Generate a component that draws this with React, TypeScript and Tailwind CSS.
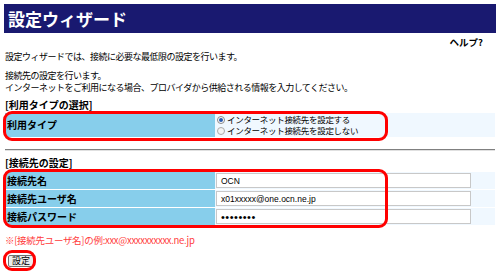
import React from 'react';

const jp = { fontFamily: '"MS PGothic", "Noto Sans CJK JP", sans-serif' };

function RedRing({ className }: { className: string }) {
  return <div className={`pointer-events-none absolute rounded-[9px] border-[3px] border-[#ff0000] ${className}`} />;
}

function InputRow({ label, value, password }: { label: string; value: string; password?: boolean }) {
  return (
    <div className="flex h-[17px]">
      <div className="flex w-[210px] items-center bg-[#87ceeb] pl-[2px] text-[10px] font-bold leading-[12px] text-black">
        {label}
      </div>
      <div className="flex flex-1 items-center bg-[#f0f8ff] pl-[1px]">
        <div
          className="flex h-[15px] w-[255px] items-center border border-[#c8c8c8] bg-white pl-[4px] text-[8.5px] leading-[10px] text-black"
          style={{ fontFamily: '"Liberation Sans", Arial, sans-serif' }}
        >
          {password ? <span className="text-[11px] leading-[10px] tracking-[0.5px]">••••••••</span> : value}
        </div>
      </div>
    </div>
  );
}

export default function App() {
  return (
    <div className="h-[278px] w-[500px] overflow-hidden bg-white text-black" style={jp}>
      <div className="mx-[4px] mt-[4px] flex h-[29px] items-center bg-[#191970] pl-[4px] text-[17px] font-bold leading-[20px] text-white">
        設定ウィザード
      </div>
      <div className="mt-[4px] pr-[17px] text-right text-[9.5px] font-bold leading-[10px]">ヘルプ?</div>
      <div className="px-[5px] text-[9px] leading-[12px] tracking-[-0.5px]">
        <p className="mt-[4px]">設定ウィザードでは、接続に必要な最低限の設定を行います。</p>
        <p className="mt-[7px]">接続先の設定を行います。</p>
        <p>インターネットをご利用になる場合、プロバイダから供給される情報を入力してください。</p>
      </div>

      <div className="mt-[5px] px-[5px] text-[10px] font-bold leading-[12px]">[利用タイプの選択]</div>
      <div className="relative mx-[5px] mt-[2px]">
        <div className="flex h-[24px]">
          <div className="flex w-[210px] items-center bg-[#87ceeb] pl-[2px] text-[10px] font-bold leading-[12px]">
            利用タイプ
          </div>
          <div className="flex flex-1 flex-col justify-center bg-[#f0f8ff] pl-[2px] text-[8.5px] leading-[11px] tracking-[-0.3px]">
            <label className="flex h-[11px] items-center gap-[2px]">
              <span className="flex h-[8px] w-[8px] items-center justify-center rounded-full border border-[#888] bg-white">
                <span className="h-[4px] w-[4px] rounded-full bg-[#2a5db0]" />
              </span>
              インターネット接続先を設定する
            </label>
            <label className="flex h-[11px] items-center gap-[2px]">
              <span className="h-[8px] w-[8px] rounded-full border border-[#aaa] bg-[#f4f4f4]" />
              インターネット接続先を設定しない
            </label>
          </div>
        </div>
        <RedRing className="-left-[2px] -top-[2px] h-[30px] w-[385px]" />
      </div>

      <div className="mx-[5px] mt-[12px] h-[2px] border-t border-b border-t-[#808080] border-b-[#e0e0e0]" />

      <div className="mt-[6px] px-[5px] text-[10px] font-bold leading-[12px]">[接続先の設定]</div>
      <div className="relative mx-[5px] mt-[3px] flex flex-col gap-[1px]">
        <InputRow label="接続先名" value="OCN" />
        <InputRow label="接続先ユーザ名" value="x01xxxxx@one.ocn.ne.jp" />
        <InputRow label="接続パスワード" value="" password />
        <RedRing className="-left-[2px] -top-[3px] h-[59px] w-[385px]" />
      </div>

      <div className="mt-[9px] px-[5px] text-[9.5px] leading-[12px] tracking-[-0.3px] text-[#ff3c3c]">
        ※[接続先ユーザ名]の例:xxx@xxxxxxxxxx.ne.jp
      </div>

      <div className="relative ml-[8px] mt-[9px] w-fit">
        <button className="flex h-[12px] items-center rounded-[2px] border border-[#707070] bg-[#ececec] px-[3px] text-[9px] leading-[10px]">
          設定
        </button>
        <RedRing className="-left-[5px] -top-[5px] h-[21px] w-[33px]" />
      </div>
    </div>
  );
}
